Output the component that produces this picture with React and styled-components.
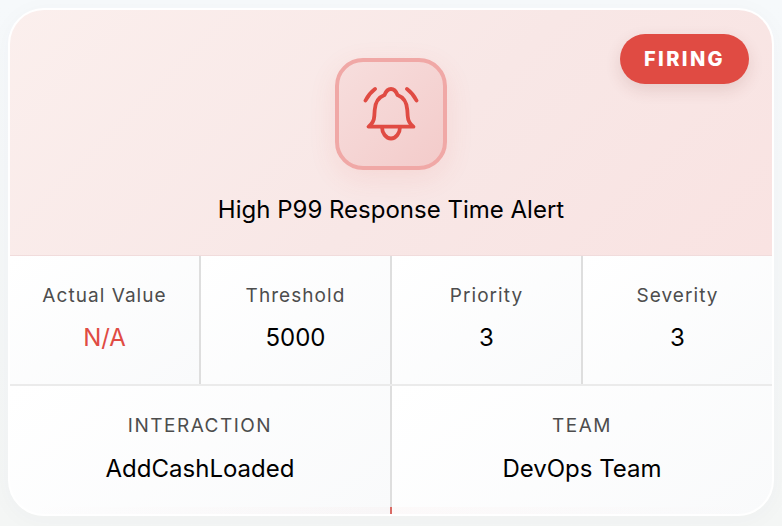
import React from "react";
import styled, { createGlobalStyle } from "styled-components";

const Global = createGlobalStyle`
  html, body { margin: 0; padding: 0; width: 782px; height: 526px; overflow: hidden; background: linear-gradient(180deg, #f6f9fb 0%, #f4f6f5 100%); }
  body { font-family: "Inter", "Liberation Sans", sans-serif; }
`;

const Page = styled.div`
  width: 782px;
  height: 526px;
  padding: 8px;
  box-sizing: border-box;
`;

const Card = styled.div`
  position: relative;
  width: 766px;
  height: 508px;
  box-sizing: border-box;
  border: 2px solid #ffffff;
  border-radius: 36px;
  overflow: hidden;
  background: #ffffff;
  box-shadow: 0 4px 24px rgba(60, 70, 80, 0.03);
  display: flex;
  flex-direction: column;
`;

const Header = styled.div`
  position: relative;
  height: 246px;
  box-sizing: border-box;
  flex: none;
  padding-top: 48px;
  display: flex;
  flex-direction: column;
  align-items: center;
  background: linear-gradient(135deg, #fbefed 0%, #f8e7e6 55%, #f9e3e2 100%);
  border-bottom: 1px solid #f1dcdc;
`;

const Badge = styled.div`
  position: absolute;
  top: 24px;
  right: 23px;
  width: 129px;
  height: 50px;
  border-radius: 25px;
  background: #e04b43;
  color: #fff;
  font-size: 20px;
  font-weight: 800;
  letter-spacing: 2.4px;
  display: flex;
  align-items: center;
  justify-content: center;
  box-shadow: 0 6px 16px rgba(120, 50, 45, 0.14);
`;

const IconBox = styled.div`
  width: 112px;
  height: 112px;
  box-sizing: border-box;
  border: 4px solid #f0a8a6;
  border-radius: 28px;
  background: linear-gradient(135deg, #f7dedd 0%, #f3cbca 100%);
  display: flex;
  align-items: center;
  justify-content: center;
  box-shadow: 0 8px 28px rgba(224, 75, 67, 0.1);
`;

const Title = styled.h1`
  margin: 24px 0 0;
  font-size: 24px;
  font-weight: 400;
  line-height: 32px;
  color: #000;
`;

const Stats = styled.div`
  flex: none;
  height: 130px;
  box-sizing: border-box;
  display: grid;
  grid-template-columns: 191px 191px 191px 1fr;
  border-bottom: 2px solid #ebebeb;
`;

const Cell = styled.div`
  background: linear-gradient(145deg, #ffffff 0%, #f9fafb 100%);
  border-right: ${(p) => (p.$last ? "none" : "2px solid #dedede")};
  display: flex;
  flex-direction: column;
  align-items: center;
  padding-top: 28px;
`;

const Label = styled.div`
  font-size: 19px;
  line-height: 24px;
  letter-spacing: ${(p) => (p.$upper ? "1.5px" : "1.05px")};
  color: #4d4d4d;
  text-transform: ${(p) => (p.$upper ? "uppercase" : "none")};
`;

const Value = styled.div`
  margin-top: 14px;
  font-size: 24px;
  line-height: 32px;
  color: ${(p) => (p.$red ? "#e04b43" : "#000")};
`;

const Meta = styled.div`
  flex: 1;
  display: grid;
  grid-template-columns: 382px 1fr;
`;

const MetaCell = styled.div`
  background: linear-gradient(145deg, #ffffff 0%, #f9fafb 100%);
  border-right: ${(p) => (p.$last ? "none" : "2px solid #dedede")};
  display: flex;
  flex-direction: column;
  align-items: center;
  padding-top: 28px;
`;

const MetaValue = styled(Value)`
  margin-top: 15px;
`;

const Strip = styled.div`
  position: absolute;
  left: 0;
  right: 0;
  bottom: 0;
  height: 7px;
  background: linear-gradient(90deg, rgba(224, 75, 67, 0) 0%, rgba(224, 75, 67, 0.022) 50%, rgba(224, 75, 67, 0) 100%);
`;

const Tick = styled.div`
  position: absolute;
  left: 380px;
  bottom: 0;
  width: 2px;
  height: 7px;
  background: #d96a64;
`;

const Bell = () => (
  <svg width="56" height="56" viewBox="0 0 56 56" fill="none" stroke="#e04b43" strokeWidth="3.8" strokeLinecap="round" strokeLinejoin="round">
    <path d="M5.500 40.700H50.500C46 37.500 44.900 34 44.700 30L44.300 24C43.800 16 40 11 34.500 9C33 5 30.500 3 28 3C25.500 3 23 5 21.500 9C16 11 12.200 16 11.700 24L11.300 30C11.100 34 10 37.500 5.500 40.700Z" />
    <path d="M19 41C19 47 23 52.500 28 52.500C33 52.500 37 47 37 41" />
    <path d="M2.500 14.500Q6 7.500 12 3" />
    <path d="M53.500 14.500Q50 7.500 44 3" />
  </svg>
);

const stats = [
  { label: "Actual Value", value: "N/A", red: true },
  { label: "Threshold", value: "5000" },
  { label: "Priority", value: "3" },
  { label: "Severity", value: "3" },
];

export default function App() {
  return (
    <Page>
      <Global />
      <Card>
        <Header>
          <Badge>FIRING</Badge>
          <IconBox>
            <Bell />
          </IconBox>
          <Title>High P99 Response Time Alert</Title>
        </Header>
        <Stats>
          {stats.map((s, i) => (
            <Cell key={s.label} $last={i === 3}>
              <Label>{s.label}</Label>
              <Value $red={s.red}>{s.value}</Value>
            </Cell>
          ))}
        </Stats>
        <Meta>
          <MetaCell>
            <Label $upper>Interaction</Label>
            <MetaValue>AddCashLoaded</MetaValue>
          </MetaCell>
          <MetaCell $last>
            <Label $upper>Team</Label>
            <MetaValue>DevOps Team</MetaValue>
          </MetaCell>
        </Meta>
        <Strip />
        <Tick />
      </Card>
    </Page>
  );
}
